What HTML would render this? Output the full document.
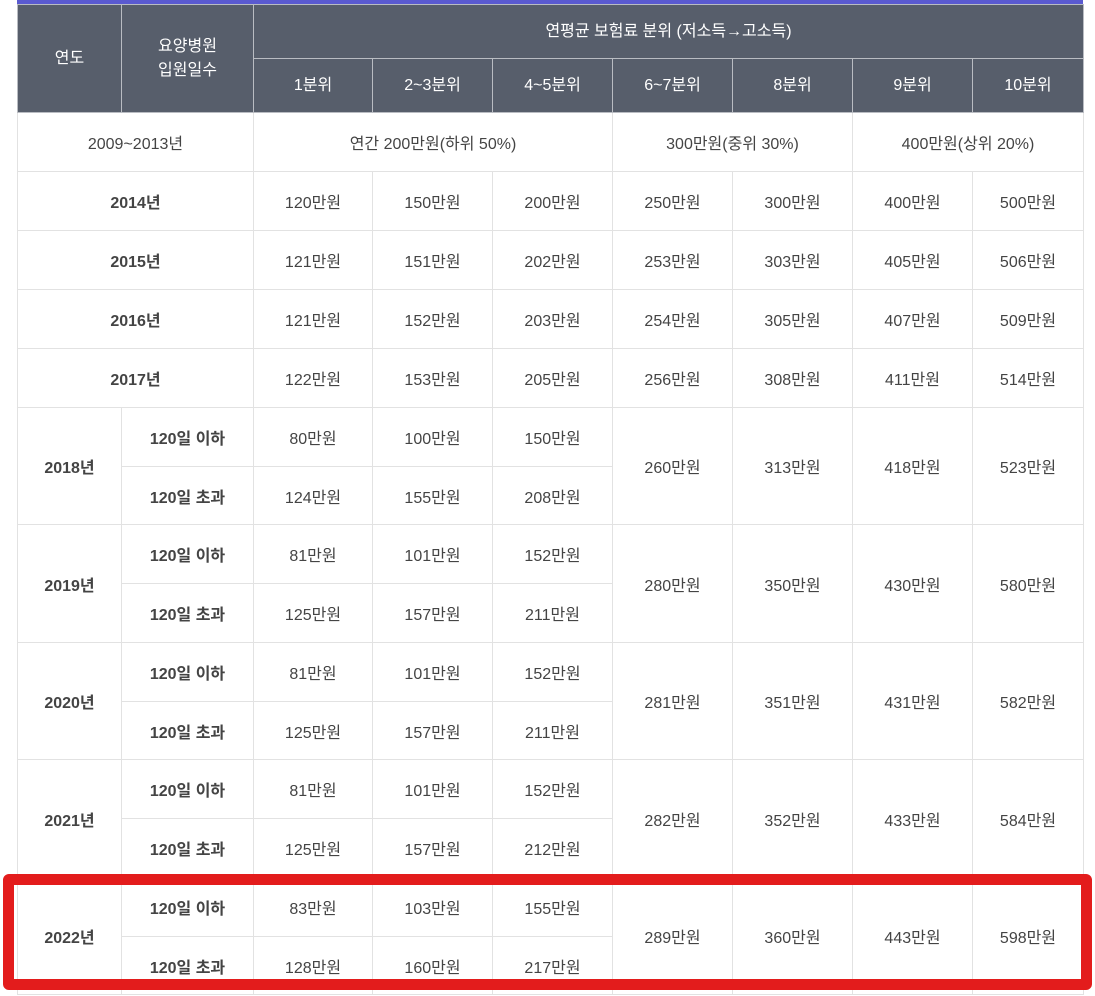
<!DOCTYPE html>
<html><head><meta charset="utf-8"><style>
body{margin:0;width:1095px;height:996px;background:#fff;position:relative;overflow:hidden;font-family:"Liberation Sans","Noto Sans CJK KR","NanumGothic",sans-serif;}
.top{position:absolute;left:17px;top:0;width:1066px;height:4px;background:#5a5ad0;}
table{position:absolute;left:17px;top:4px;border-collapse:collapse;table-layout:fixed;width:1066px;}
td,th{border:1px solid #e2e2e2;text-align:center;font-size:16px;color:#444;padding:0;}
th{background:#575e6b;color:#fff;font-weight:normal;border-color:#b9bcc2;line-height:24px;}
td.b{font-weight:bold;color:#444;}
.red{position:absolute;left:3px;top:874px;width:1067px;height:94px;border:11px solid #e31c1c;border-radius:6px;}
</style></head><body>
<div class="top"></div>
<table>
<colgroup><col style="width:104px"><col style="width:132px"><col style="width:119px"><col style="width:120px"><col style="width:120px"><col style="width:120px"><col style="width:120px"><col style="width:120px"><col style="width:111px"></colgroup>
<tr style="height:54px"><th rowspan="2">연도</th><th rowspan="2">요양병원<br>입원일수</th><th colspan="7">연평균 보험료 분위 (저소득→고소득)</th></tr>
<tr style="height:54px"><th>1분위</th><th>2~3분위</th><th>4~5분위</th><th>6~7분위</th><th>8분위</th><th>9분위</th><th>10분위</th></tr>
<tr style="height:59px"><td class="b" colspan="2" style="font-weight:normal">2009~2013년</td><td colspan="3">연간 200만원(하위 50%)</td><td colspan="2">300만원(중위 30%)</td><td colspan="2">400만원(상위 20%)</td></tr>
<tr style="height:59px"><td class="b" colspan="2">2014년</td><td>120만원</td><td>150만원</td><td>200만원</td><td>250만원</td><td>300만원</td><td>400만원</td><td>500만원</td></tr>
<tr style="height:59px"><td class="b" colspan="2">2015년</td><td>121만원</td><td>151만원</td><td>202만원</td><td>253만원</td><td>303만원</td><td>405만원</td><td>506만원</td></tr>
<tr style="height:59px"><td class="b" colspan="2">2016년</td><td>121만원</td><td>152만원</td><td>203만원</td><td>254만원</td><td>305만원</td><td>407만원</td><td>509만원</td></tr>
<tr style="height:59px"><td class="b" colspan="2">2017년</td><td>122만원</td><td>153만원</td><td>205만원</td><td>256만원</td><td>308만원</td><td>411만원</td><td>514만원</td></tr>
<tr style="height:59px"><td class="b" rowspan="2">2018년</td><td class="b">120일 이하</td><td>80만원</td><td>100만원</td><td>150만원</td><td rowspan="2">260만원</td><td rowspan="2">313만원</td><td rowspan="2">418만원</td><td rowspan="2">523만원</td></tr>
<tr style="height:58px"><td class="b">120일 초과</td><td>124만원</td><td>155만원</td><td>208만원</td></tr>
<tr style="height:59px"><td class="b" rowspan="2">2019년</td><td class="b">120일 이하</td><td>81만원</td><td>101만원</td><td>152만원</td><td rowspan="2">280만원</td><td rowspan="2">350만원</td><td rowspan="2">430만원</td><td rowspan="2">580만원</td></tr>
<tr style="height:59px"><td class="b">120일 초과</td><td>125만원</td><td>157만원</td><td>211만원</td></tr>
<tr style="height:59px"><td class="b" rowspan="2">2020년</td><td class="b">120일 이하</td><td>81만원</td><td>101만원</td><td>152만원</td><td rowspan="2">281만원</td><td rowspan="2">351만원</td><td rowspan="2">431만원</td><td rowspan="2">582만원</td></tr>
<tr style="height:58px"><td class="b">120일 초과</td><td>125만원</td><td>157만원</td><td>211만원</td></tr>
<tr style="height:59px"><td class="b" rowspan="2">2021년</td><td class="b">120일 이하</td><td>81만원</td><td>101만원</td><td>152만원</td><td rowspan="2">282만원</td><td rowspan="2">352만원</td><td rowspan="2">433만원</td><td rowspan="2">584만원</td></tr>
<tr style="height:59px"><td class="b">120일 초과</td><td>125만원</td><td>157만원</td><td>212만원</td></tr>
<tr style="height:59px"><td class="b" rowspan="2">2022년</td><td class="b">120일 이하</td><td>83만원</td><td>103만원</td><td>155만원</td><td rowspan="2">289만원</td><td rowspan="2">360만원</td><td rowspan="2">443만원</td><td rowspan="2">598만원</td></tr>
<tr style="height:58px"><td class="b">120일 초과</td><td>128만원</td><td>160만원</td><td>217만원</td></tr>
</table>
<div class="red"></div>
</body></html>
